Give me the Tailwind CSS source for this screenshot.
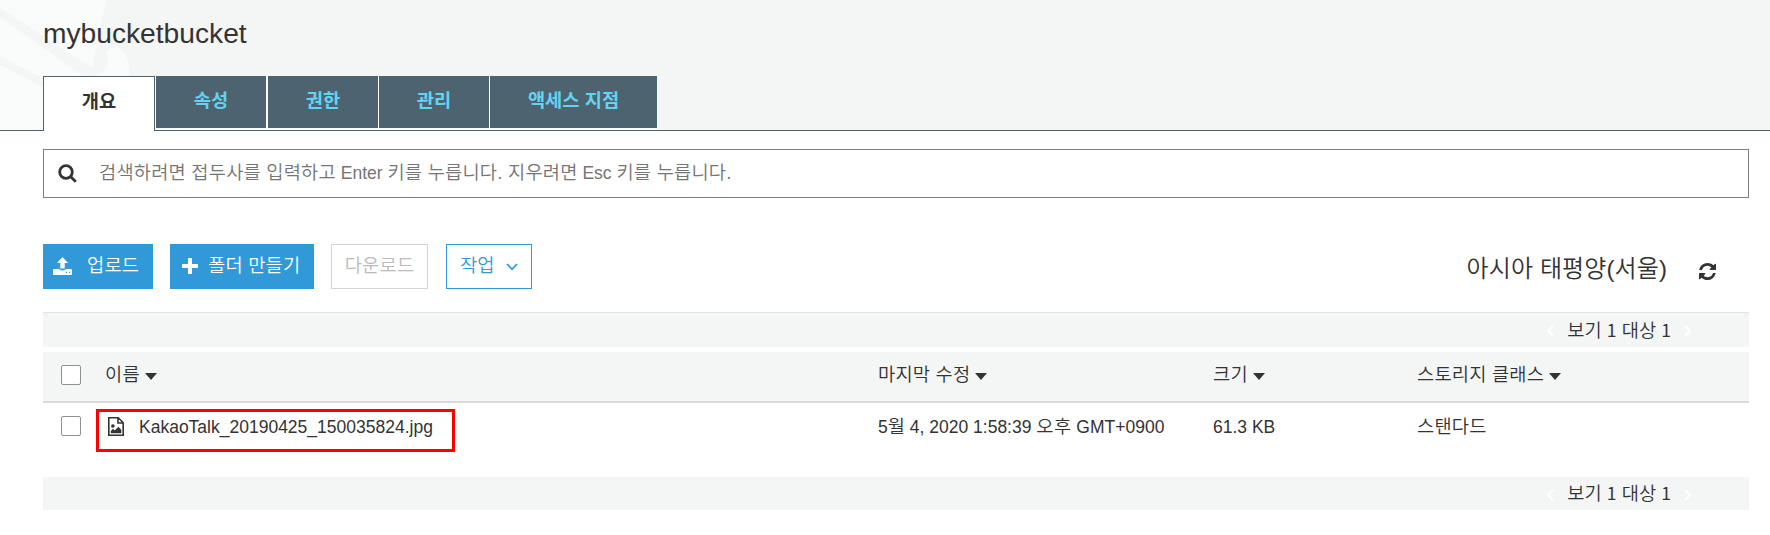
<!DOCTYPE html>
<html lang="ko">
<head>
<meta charset="utf-8">
<title>mybucketbucket</title>
<script src="https://cdn.jsdelivr.net/npm/@tailwindcss/browser@4"></script>
</head>
<body class="h-[535px] w-[1770px] overflow-hidden bg-white font-['Liberation_Sans','Noto_Sans_CJK_KR',sans-serif] text-[17.5px] leading-[24px] text-[#333] whitespace-nowrap">
<header class="relative flex h-[131px] flex-col border-b border-[#4d6470] bg-[#f4f6f6] pl-[43px]">
  <svg class="absolute left-0 top-0" width="132" height="130" viewBox="0 0 132 130" fill="#fafcfb">
    <path d="M0 0H106L92 68L0 8Z"/>
    <path d="M0 17L83 76H43V78L0 56Z"/>
    <path d="M0 65L43 87V130H0Z"/>
    <path d="M106 53C109 45 120 45 125 55C129 63 130 70 129 76H96C104 73 111 63 106 53Z"/>
  </svg>
  <h1 class="relative h-[76px] shrink-0 pt-[17px] text-[28.2px] leading-[32px]">mybucketbucket</h1>
  <nav class="relative flex h-[55px] shrink-0 items-start text-[18.7px] font-bold text-[#63d3f2]">
    <a class="mr-px flex h-[55px] w-[112px] justify-center border border-b-0 border-[#4d6470] bg-white pt-[13px] text-[#333]">개요</a>
    <div class="flex h-[54px] bg-[#fafbfb]">
      <a class="mr-[2px] flex h-[52px] w-[110px] justify-center bg-[#4d6470] pt-[13px]">속성</a>
      <a class="mr-px flex h-[52px] w-[110px] justify-center bg-[#4d6470] pt-[13px]">권한</a>
      <a class="mr-px flex h-[52px] w-[110px] justify-center bg-[#4d6470] pt-[13px]">관리</a>
      <a class="flex h-[52px] w-[167px] justify-center bg-[#4d6470] pt-[13px]">액세스 지점</a>
    </div>
  </nav>
</header>
<main class="ml-[43px] w-[1706px] pt-[18px]">
  <div class="flex h-[49px] items-center border border-[#7d7d7d] pl-[14px] text-[#757575]">
    <svg class="-mt-px" width="19" height="19" viewBox="0 0 19 19" fill="none" stroke="#333" stroke-width="2.8"><circle cx="8" cy="8" r="6.3"/><path d="M12.5 12.5L17.8 17.8"/></svg>
    <p class="ml-[22px] pb-[2px]"><span class="text-[18.7px] font-[350] tracking-[0.2px]">검색하려면 접두사를 입력하고</span> Enter <span class="text-[18.7px] font-[350] tracking-[0.2px]">키를 누릅니다. 지우려면</span> Esc <span class="text-[18.7px] font-[350] tracking-[0.2px]">키를 누릅니다.</span></p>
  </div>
  <div class="mt-[46px] flex h-[45px] text-[18.7px] font-[350]">
    <button class="flex w-[110px] items-center bg-[#3199d7] pl-[10px] text-white">
      <svg class="mb-px" width="19" height="18" viewBox="0 0 19 18" fill="#fff"><path d="M9.5 0L15 6H11.7V11.5H7.3V6H4Z"/><path fill-rule="evenodd" d="M1 12H6Q7 13.4 9.5 13.4T13 12H18Q19 12 19 13V17Q19 18 18 18H1Q0 18 0 17V13Q0 12 1 12ZM13 14.8V16H14.2V14.8ZM16 14.8V16H17.2V14.8Z"/></svg>
      <span class="ml-[15px] pb-[2px] tracking-[0.2px]">업로드</span></button>
    <button class="ml-[17px] flex w-[144px] items-center bg-[#3199d7] pl-[12px] text-white">
      <svg class="mb-[2px]" width="16" height="16" viewBox="0 0 16 16" fill="#fff"><path d="M6 .8Q6 0 6.8 0H9.2Q10 0 10 .8V6H15.2Q16 6 16 6.8V9.2Q16 10 15.2 10H10V15.2Q10 16 9.2 16H6.8Q6 16 6 15.2V10H.8Q0 10 0 9.2V6.8Q0 6 .8 6H6Z"/></svg>
      <span class="ml-[10px] pb-[2px] tracking-[0.2px]">폴더 만들기</span></button>
    <button class="ml-[17px] flex w-[97px] items-center justify-center border border-[#d5d5d5] pb-[2px] tracking-[0.2px] text-[#bbb]">다운로드</button>
    <button class="ml-[18px] flex w-[86px] items-center border border-[#3199d7] pl-[13px] text-[#3199d7]"><span class="pb-[2px]">작업</span>
      <svg class="ml-[12px] mt-px" width="12" height="8" viewBox="0 0 12 8" fill="none" stroke="#3199d7" stroke-width="1.8"><path d="M1 1L6 6.3L11 1"/></svg></button>
    <div class="ml-auto flex h-[50px] items-center pr-[33px]"><span class="text-[24px] tracking-[0.1px]">아시아 태평양(서울)</span>
      <svg class="ml-[32px] mt-[5px]" width="17" height="17" viewBox="0 0 1536 1536" fill="#333"><path d="M1511 928q0 5-1 7-64 268-268 434.500T764 1536q-146 0-282.500-55T238 1324l-129 129q-19 19-45 19t-45-19-19-45V960q0-26 19-45t45-19h448q26 0 45 19t19 45-19 45l-137 137q71 66 161 102t187 36q134 0 250-65t186-179q11-17 53-117 8-23 30-23h192q13 0 22.500 9.500t9.500 22.500zM1536 128v448q0 26-19 45t-45 19h-448q-26 0-45-19t-19-45 19-45l138-138Q969 256 768 256q-134 0-250 65T332 500q-11 17-53 117-8 23-30 23H50q-13 0-22.500-9.500T18 608v-7q65-268 270-434.500T768 0q146 0 284 55.500T1297 212l130-129q19-19 45-19t45 19 19 45z"/></svg></div>
  </div>
  <div class="mt-[23px] flex h-[35px] items-center justify-end border-t border-[#e1e3e3] bg-[#f4f6f6] pr-[57px]">
    <svg class="mt-[2px]" width="8" height="12" viewBox="0 0 8 12" fill="none" stroke="#fff" stroke-width="2"><path d="M7 1L2 6L7 11"/></svg>
    <span class="ml-[13px] mr-[13px] text-[18.7px] font-[350]">보기 <span class="font-['Noto_Sans_CJK_KR'] text-[17.5px] font-normal">1</span> 대상 <span class="font-['Noto_Sans_CJK_KR'] text-[17.5px] font-normal">1</span></span>
    <svg class="mt-[2px]" width="8" height="12" viewBox="0 0 8 12" fill="none" stroke="#fff" stroke-width="2"><path d="M1 1L6 6L1 11"/></svg>
  </div>
  <div class="mt-[5px] grid h-[51px] grid-cols-[62px_773px_335px_204px_1fr] items-center border-b-2 border-[#dcdcdc] bg-[#f4f6f6] text-[18.7px] font-[350] tracking-[0.2px]">
    <i class="mb-[3px] ml-[18px] size-[20px] rounded-[2px] border border-[#8c9192] bg-white"></i>
    <div class="flex items-center pb-[3px]">이름<svg class="ml-[5px] mt-[2px]" width="12" height="7" viewBox="0 0 12 7"><path d="M0 0H12L6 7Z" fill="#333"/></svg></div>
    <div class="flex items-center pb-[3px]">마지막 수정<svg class="ml-[5px] mt-[2px]" width="12" height="7" viewBox="0 0 12 7"><path d="M0 0H12L6 7Z" fill="#333"/></svg></div>
    <div class="flex items-center pb-[3px]">크기<svg class="ml-[5px] mt-[2px]" width="12" height="7" viewBox="0 0 12 7"><path d="M0 0H12L6 7Z" fill="#333"/></svg></div>
    <div class="flex items-center pb-[3px]">스토리지 클래스<svg class="ml-[5px] mt-[2px]" width="12" height="7" viewBox="0 0 12 7"><path d="M0 0H12L6 7Z" fill="#333"/></svg></div>
  </div>
  <div class="relative grid h-[74px] grid-cols-[62px_773px_335px_204px_1fr] items-start pt-[12px]">
    <i class="ml-[18px] mt-px size-[20px] rounded-[2px] border border-[#8c9192] bg-white"></i>
    <div class="flex items-center">
      <svg class="-mt-px ml-[3px]" width="16" height="19" viewBox="0 0 16 19" fill="none" stroke="#333" stroke-width="1.6"><path d="M.8 .8H10.2L15.2 5.8V18.2H.8ZM10 .8V6H15.2"/><path d="M2.8 16.2V14L5 11.8L6.8 13.6L10.3 9.8L13.3 12.8V16.2Z" fill="#333" stroke="none"/><circle cx="4.9" cy="9" r="1.8" fill="#333" stroke="none"/></svg>
      <span class="ml-[15px]">KakaoTalk_20190425_150035824.jpg</span></div>
    <div>5<span class="text-[18.7px] font-[350]">월</span> 4, 2020 1:58:39 <span class="text-[18.7px] font-[350] tracking-[0.4px]">오후</span> GMT+0900</div>
    <div>61.3 KB</div>
    <div class="text-[18.7px] font-[350] tracking-[0.2px]">스탠다드</div>
    <div class="absolute left-[53px] top-[6px] h-[43px] w-[359px] border-[3px] border-[#fe0000]"></div>
  </div>
  <div class="flex h-[33px] items-center justify-end bg-[#f4f6f6] pr-[57px]">
    <svg class="mt-[2px]" width="8" height="12" viewBox="0 0 8 12" fill="none" stroke="#fff" stroke-width="2"><path d="M7 1L2 6L7 11"/></svg>
    <span class="ml-[13px] mr-[13px] text-[18.7px] font-[350]">보기 <span class="font-['Noto_Sans_CJK_KR'] text-[17.5px] font-normal">1</span> 대상 <span class="font-['Noto_Sans_CJK_KR'] text-[17.5px] font-normal">1</span></span>
    <svg class="mt-[2px]" width="8" height="12" viewBox="0 0 8 12" fill="none" stroke="#fff" stroke-width="2"><path d="M1 1L6 6L1 11"/></svg>
  </div>
</main>
</body>
</html>
